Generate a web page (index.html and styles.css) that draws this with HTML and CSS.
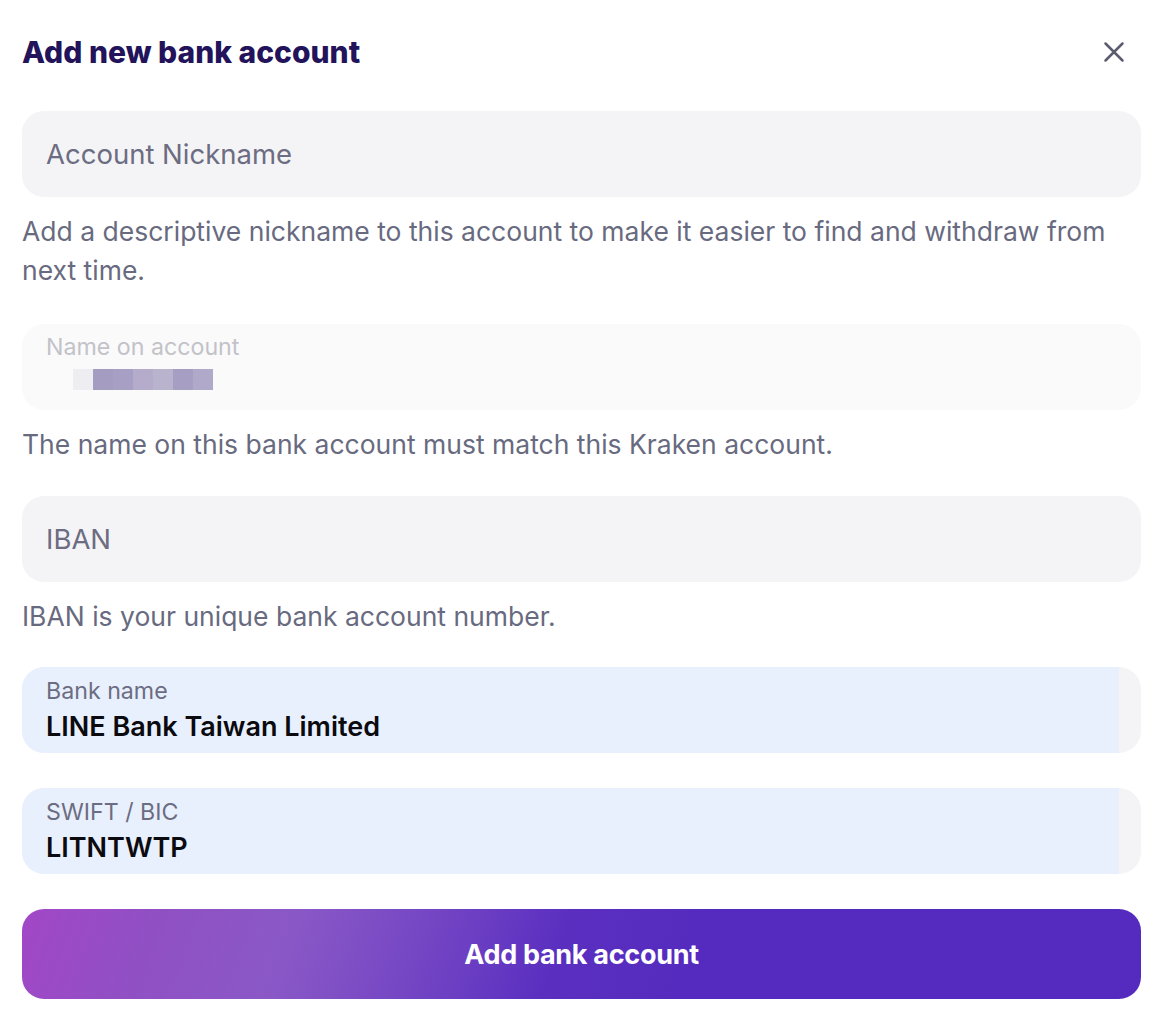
FILE: index.html
```html
<!DOCTYPE html>
<html lang="en">
<head>
<meta charset="utf-8">
<title>Add new bank account</title>
<link rel="stylesheet" href="styles.css">
</head>
<body>
<div class="modal">
  <header class="modal-head">
    <h1 class="title">Add new bank account</h1>
    <button class="close" aria-label="Close">
      <svg width="24" height="24" viewBox="0 0 24 24"><path d="M3.5 3.5L20.5 20.5M20.5 3.5L3.5 20.5" stroke="#5c5c70" stroke-width="2.5" stroke-linecap="round"/></svg>
    </button>
  </header>

  <div class="group group-1">
    <div class="field"><span class="placeholder">Account Nickname</span></div>
    <p class="help">Add a descriptive nickname to this account to make it easier to find and withdraw from next time.</p>
  </div>

  <div class="group group-2">
    <div class="field field-disabled">
      <span class="label label-disabled">Name on account</span>
      <span class="blur">
        <i class="px px1"></i><i class="px px2"></i><i class="px px3"></i><i class="px px4"></i><i class="px px5"></i><i class="px px6"></i><i class="px px7"></i>
      </span>
    </div>
    <p class="help">The name on this bank account must match this Kraken account.</p>
  </div>

  <div class="group group-3">
    <div class="field"><span class="placeholder">IBAN</span></div>
    <p class="help">IBAN is your unique bank account number.</p>
  </div>

  <div class="group group-4">
    <div class="field field-filled">
      <div class="autofill">
        <span class="label">Bank name</span>
        <span class="value">LINE Bank Taiwan Limited</span>
      </div>
    </div>
  </div>

  <div class="group group-5">
    <div class="field field-filled">
      <div class="autofill">
        <span class="label">SWIFT / BIC</span>
        <span class="value">LITNTWTP</span>
      </div>
    </div>
  </div>

  <button class="submit">Add bank account</button>
</div>
</body>
</html>
```
FILE: styles.css
```css
* { box-sizing: border-box; }
html, body { margin: 0; padding: 0; background: #ffffff; }
body {
  font-family: Inter, "Noto Sans", "Liberation Sans", sans-serif;
  color: #686a80;
}
.modal {
  padding: 22px 21px 20px 22px;
  display: flex;
  flex-direction: column;
}
.modal-head {
  display: flex;
  align-items: center;
  justify-content: space-between;
  height: 60px;
  margin-bottom: 29px;
}
.title {
  margin: 0;
  font-size: 30px;
  font-weight: 800;
  letter-spacing: 0;
  color: #22135a;
}
.close {
  border: 0;
  background: transparent;
  padding: 0;
  margin-right: 15px;
  width: 24px;
  height: 24px;
  display: flex;
  cursor: pointer;
}
.group {
  display: flex;
  flex-direction: column;
}
.group-1 { margin-bottom: 34px; }
.group-2 { margin-bottom: 32px; }
.group-3 { margin-bottom: 31px; }
.group-4 { margin-bottom: 35px; }
.group-5 { margin-bottom: 35px; }
.field {
  height: 86px;
  border-radius: 22px;
  background: #f4f4f6;
  display: flex;
  flex-direction: column;
  justify-content: center;
  padding: 0 24px;
}
.placeholder {
  font-size: 27.5px;
  color: #6c6c82;
}
.help {
  margin: 15px 0 0;
  font-size: 26.5px;
  line-height: 39px;
  color: #686a80;
}
.field-disabled {
  background: #fafafb;
  justify-content: flex-start;
  padding-top: 9px;
}
.label {
  font-size: 23.2px;
  line-height: 28px;
  color: #6c6c82;
}
.label-disabled { color: #c2c2c8; }
.blur {
  display: flex;
  margin-top: 8px;
  margin-left: 27px;
  height: 21px;
}
.px { display: block; width: 20px; height: 21px; }
.px1 { background: #eeedf2; }
.px2 { background: #a59cc1; }
.px3 { background: #a89fc4; }
.px4 { background: #b4acca; }
.px5 { background: #bab3cd; }
.px6 { background: #a79ec3; }
.px7 { background: #b1a9c9; }
.field-filled {
  padding: 0 22px 0 0;
  justify-content: stretch;
}
.autofill {
  flex: 1;
  background: #e8f0fe;
  border-radius: 22px 0 0 22px;
  padding: 10px 24px 0;
  display: flex;
  flex-direction: column;
}
.value {
  margin-top: 4px;
  font-size: 27px;
  line-height: 36px;
  font-weight: 600;
  color: #0a0a0f;
}
.submit {
  height: 90px;
  border: 0;
  border-radius: 22px;
  background: linear-gradient(110deg, #a247c6 0%, #9050c4 12%, #8a58c6 24%, #7446c4 36%, #5a2fc0 48%, #552bbf 60%, #552bbf 100%);
  color: #ffffff;
  font-family: Inter, "Noto Sans", "Liberation Sans", sans-serif;
  font-size: 27px;
  font-weight: 700;
  letter-spacing: -0.3px;
  cursor: pointer;
}
```
